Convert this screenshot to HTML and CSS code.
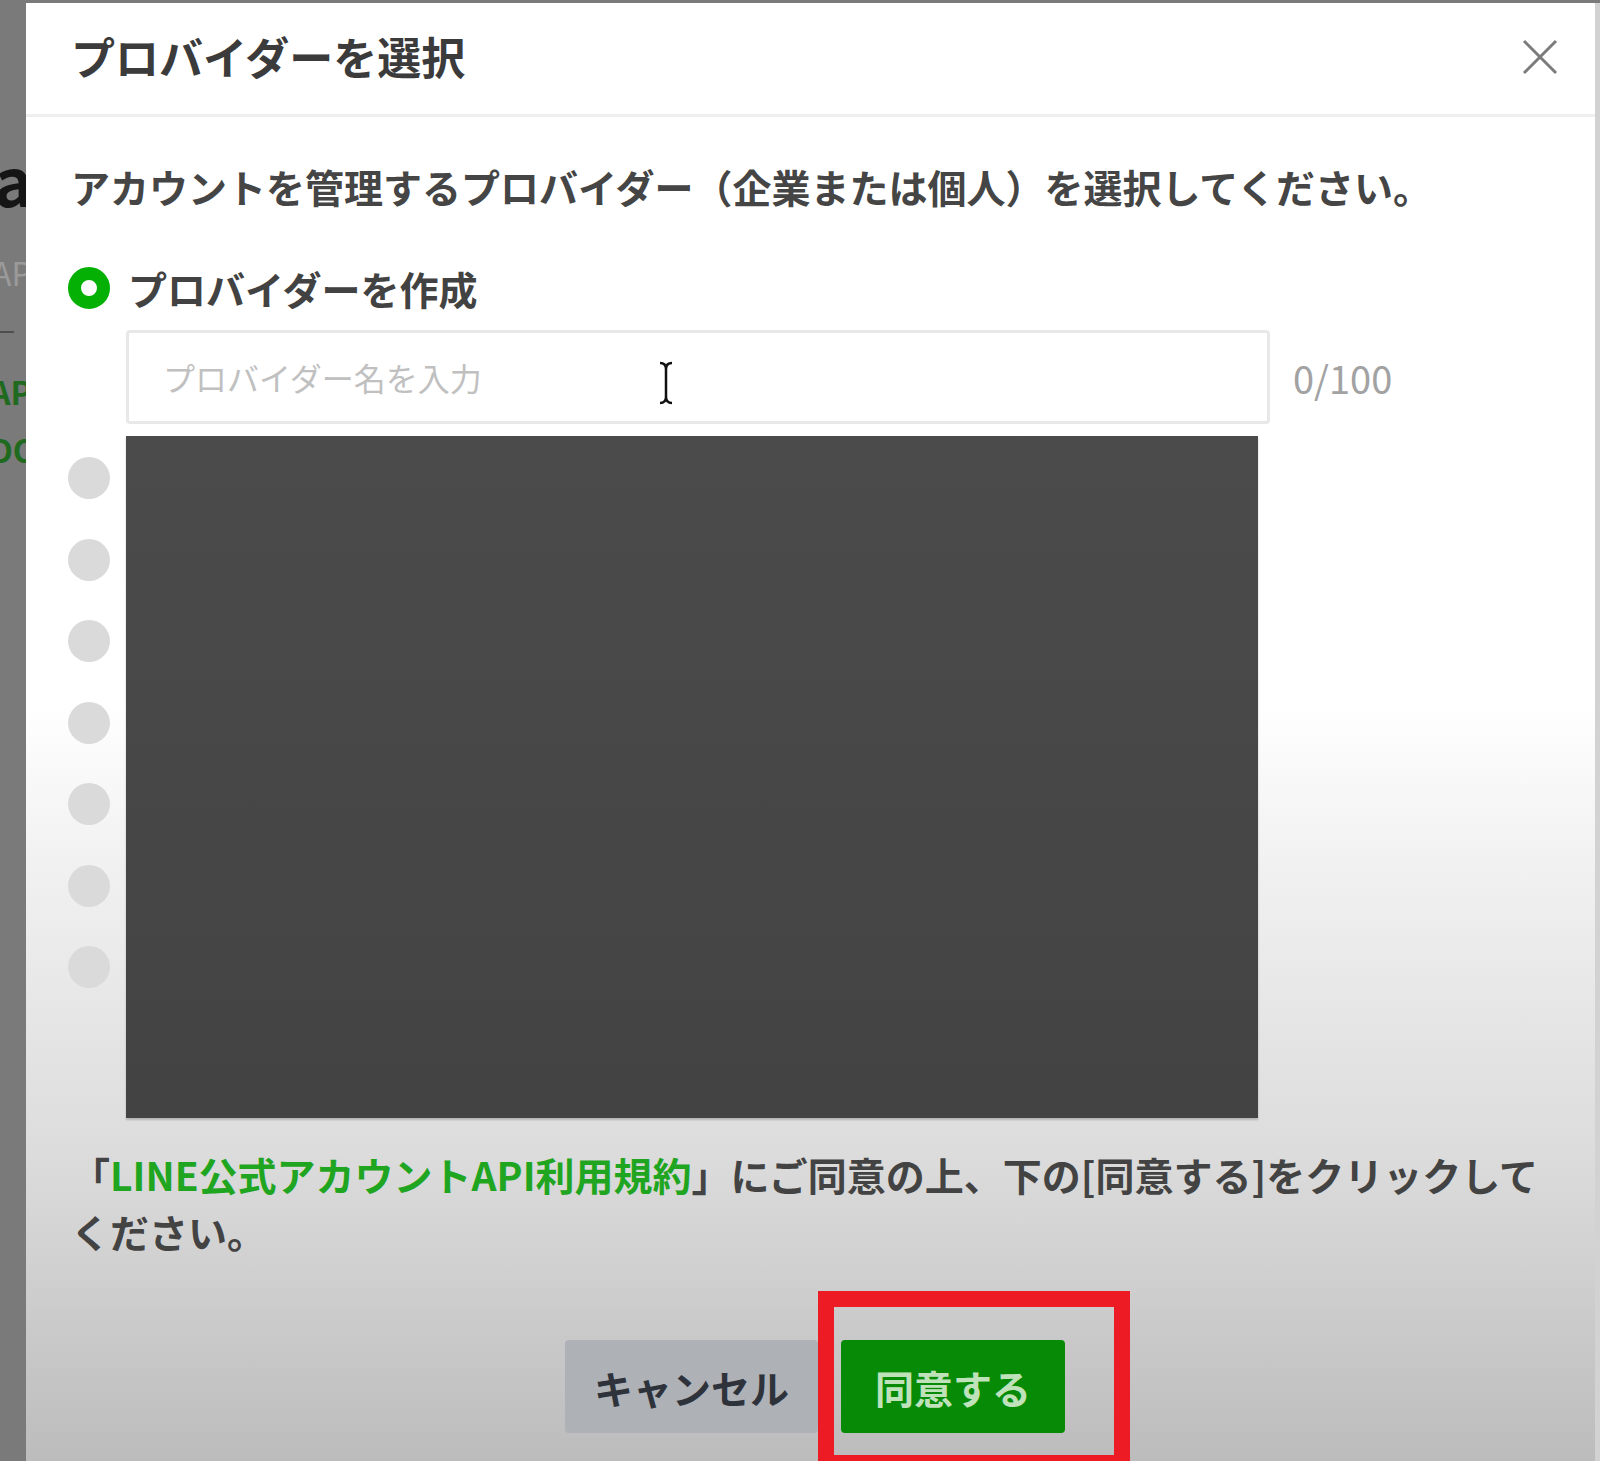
FILE: index.html
```html
<!DOCTYPE html>
<html lang="ja">

<head>
    <meta charset="UTF-8">
    <meta name="viewport" content="width=device-width, initial-scale=1.0">
    <title>プロバイダーを選択</title>
    <link rel="stylesheet" href="styles.css">
</head>

<body>

    <div class="backdrop">
        <!-- the page behind the dialog, mostly hidden -->
        <div class="page-edge">
            <span class="edge-heading">ag</span>
            <span class="edge-label">AP</span>
            <span class="edge-rule"></span>
            <span class="edge-link">AP</span>
            <span class="edge-link">DO</span>
        </div>

        <div class="modal">
            <div class="modal-header">
                <h2>プロバイダーを選択</h2>
                <button class="close-btn" type="button" aria-label="閉じる">
                    <svg width="36" height="36" viewBox="0 0 36 36">
                        <path d="M2 2 L34 34 M34 2 L2 34" stroke="#7b7b7b" stroke-width="3" fill="none" />
                    </svg>
                </button>
            </div>

            <div class="modal-body">
                <p class="lead">アカウントを管理するプロバイダー（企業または個人）を選択してください。</p>

                <!-- Create a new provider -->
                <label class="option">
                    <span class="radio checked"></span>
                    プロバイダーを作成
                </label>
                <div class="name-row">
                    <div class="name-field">
                        <input type="text" placeholder="プロバイダー名を入力">
                        <svg class="ibeam" width="16" height="44" viewBox="0 0 16 44">
                            <path d="M2 2 Q8 2 8 8 Q8 2 14 2 M8 8 V36 M2 42 Q8 42 8 36 Q8 42 14 42"
                                stroke="#111" stroke-width="2.5" fill="none" />
                        </svg>
                    </div>
                    <span class="counter">0/100</span>
                </div>

                <!-- Existing providers (names hidden) -->
                <div class="existing">
                    <div class="radio-col">
                        <span class="radio"></span>
                        <span class="radio"></span>
                        <span class="radio"></span>
                        <span class="radio"></span>
                        <span class="radio"></span>
                        <span class="radio"></span>
                        <span class="radio"></span>
                    </div>
                    <div class="redacted"></div>
                </div>

                <p class="terms">「<a href="#">LINE公式アカウントAPI利用規約</a>」にご同意の上、下の[同意する]をクリックしてください。</p>
            </div>

            <div class="modal-footer">
                <button class="btn cancel" type="button">キャンセル</button>
                <span class="agree-wrap">
                    <button class="btn agree" type="button">同意する</button>
                    <span class="highlight"></span>
                </span>
            </div>
        </div>
    </div>

</body>

</html>
```

FILE: styles.css
```css
body {
    margin: 0;
    height: 1461px;
    overflow: hidden;
    background-color: #7a7a7a;
    font-family: "Noto Sans CJK JP", "Noto Sans", sans-serif;
}

.backdrop {
    display: flex;
    height: 100%;
}

/* strip of the page visible left of the dialog */
.page-edge {
    width: 26px;
    flex-shrink: 0;
    overflow: hidden;
    display: flex;
    flex-direction: column;
    white-space: nowrap;
    font-weight: 700;
}

.edge-heading {
    margin-top: 138px;
    margin-left: -6px;
    font-size: 66px;
    line-height: 80px;
    color: #151515;
}

.edge-label {
    margin-top: 34px;
    margin-left: -8px;
    font-size: 32px;
    line-height: 40px;
    color: #9a9a9a;
    font-weight: 400;
}

.edge-rule {
    margin-top: 39px;
    width: 14px;
    height: 2px;
    background-color: #4e4e4e;
}

.edge-link {
    margin-top: 39px;
    margin-left: -10px;
    font-size: 32px;
    line-height: 38px;
    color: #1f6a1f;
}

.edge-link + .edge-link {
    margin-top: 20px;
}

.modal {
    flex: 1;
    margin-top: 3px;
    display: flex;
    flex-direction: column;
    border-right: 5px solid #d2d2d2;
    background: linear-gradient(to bottom, #ffffff 0, #ffffff 700px, #f1f1f1 860px, #dcdcdc 1150px, #bcbcbc 1458px);
}

.modal-header {
    height: 114px;
    padding: 0 37px 4px 45px;
    box-sizing: border-box;
    display: flex;
    align-items: center;
    justify-content: space-between;
    border-bottom: 3px solid #efefef;
}

.modal-header h2 {
    margin: 0;
    font-size: 44px;
    line-height: 1.2;
    font-weight: 700;
    color: #3b3b3b;
}

.close-btn {
    background: none;
    border: none;
    padding: 0;
    width: 36px;
    height: 36px;
    cursor: pointer;
}

.modal-body {
    padding: 40px 40px 0 45px;
}

.lead {
    margin: 0;
    font-size: 39px;
    line-height: 58px;
    font-weight: 700;
    color: #454545;
}

.option {
    display: flex;
    align-items: center;
    gap: 18px;
    margin-top: 44px;
    height: 58px;
    font-size: 39px;
    font-weight: 700;
    color: #424242;
}

.radio {
    display: block;
    width: 42px;
    height: 42px;
    margin-left: -3px;
    box-sizing: border-box;
    border-radius: 50%;
    background-color: #dadada;
}

.radio.checked {
    border: 13px solid #03b003;
    background-color: #ffffff;
}

.name-row {
    display: flex;
    align-items: center;
    gap: 23px;
    margin-top: 13px;
    padding-left: 55px;
}

.name-field {
    position: relative;
    width: 1144px;
    height: 94px;
    box-sizing: border-box;
    border: 3px solid #e8e8e8;
    border-radius: 4px;
    background-color: #ffffff;
}

.name-field input {
    width: 100%;
    height: 100%;
    box-sizing: border-box;
    border: none;
    outline: none;
    padding: 0 34px;
    background: transparent;
    font-family: inherit;
    font-size: 32px;
    color: #333;
}

.name-field input::placeholder {
    color: #c0c0c0;
}

/* mouse cursor captured in the screenshot */
.ibeam {
    position: absolute;
    left: 529px;
    top: 28px;
}

.counter {
    font-size: 38px;
    color: #a2a2a2;
}

.existing {
    display: flex;
    margin-top: 12px;
}

.radio-col {
    width: 55px;
    padding-top: 21px;
    display: flex;
    flex-direction: column;
    gap: 39.5px;
}

.redacted {
    width: 1132px;
    height: 682px;
    background: linear-gradient(to bottom, #4b4b4b, #434343);
    box-shadow: 0 2px 2px rgba(0, 0, 0, 0.2);
}

.terms {
    margin: 28px 0 0;
    font-size: 39px;
    line-height: 57px;
    font-weight: 700;
    color: #434343;
}

.terms a {
    color: #1fa51f;
    text-decoration: none;
}

.modal-footer {
    margin-top: 42px;
    padding: 35px 0 0 9px;
    display: flex;
    justify-content: center;
    gap: 23px;
    border-top: 3px solid #cdcdcd;
}

.btn {
    height: 93px;
    border: none;
    border-radius: 4px;
    font-family: inherit;
    font-size: 39px;
    font-weight: 700;
    cursor: pointer;
}

.cancel {
    width: 253px;
    background-color: #aeb1b6;
    color: #2e333b;
}

.agree-wrap {
    position: relative;
    display: block;
}

.agree {
    width: 224px;
    background-color: #078b07;
    color: #bfe2bb;
}

/* red annotation box round the agree button */
.highlight {
    position: absolute;
    left: -23px;
    top: -49px;
    width: 312px;
    height: 180px;
    box-sizing: border-box;
    border: 16px solid #ed1c24;
}
```
